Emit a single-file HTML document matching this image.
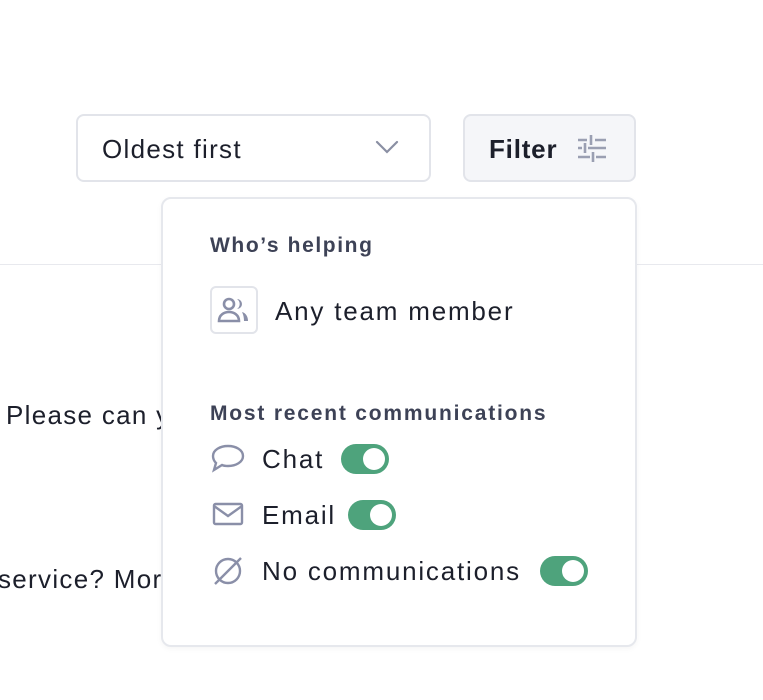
<!DOCTYPE html>
<html><head><style>
*{margin:0;padding:0;box-sizing:border-box}
body{width:763px;height:700px;background:#fff;position:relative;overflow:hidden;font-family:"Liberation Sans",sans-serif;color:#1c1f2b}
.a{position:absolute}
.t{font-size:26px;white-space:nowrap;letter-spacing:1.8px}
.h{font-size:21px;font-weight:bold;color:#3d4256;letter-spacing:1.6px;white-space:nowrap}
.tg{position:absolute;width:48px;height:30px;border-radius:15px;background:#4ea37c}
.tg::after{content:"";position:absolute;right:4px;top:4px;width:22px;height:22px;border-radius:50%;background:#fff}
</style></head><body>
<div class="a" style="left:0;top:264px;width:763px;height:1px;background:#e8e9ee"></div>
<div class="a t" style="left:6px;top:400px;letter-spacing:1.3px">Please can you</div>
<div class="a t" style="left:-2px;top:564px;letter-spacing:1.3px">service? More</div>
<div class="a" style="left:76px;top:114px;width:355px;height:68px;border:2px solid #e2e4ea;border-radius:8px;background:#fff"></div>
<div class="a t" style="left:102px;top:134px;letter-spacing:1.3px">Oldest first</div>
<svg class="a" style="left:375px;top:139px" width="24" height="16"><path d="M2 3l10 10 10-10" fill="none" stroke="#8a8fa3" stroke-width="2.2" stroke-linecap="round"/></svg>
<div class="a" style="left:463px;top:114px;width:173px;height:68px;border:2px solid #e2e4ea;border-radius:8px;background:#f5f6f9"></div>
<div class="a t" style="left:489px;top:134px;font-weight:bold;letter-spacing:0.8px">Filter</div>
<svg class="a" style="left:577px;top:135px" width="30" height="28" stroke="#9a9fb2" stroke-width="2.6" fill="none"><path d="M1 5h9M18 5h11M14 0v10M1 13h4M11 13h18M8 8v10M1 22h12M19 22h10M16 17v10"/></svg>
<div class="a" style="left:161px;top:197px;width:476px;height:450px;border:2px solid #e6e8ed;border-radius:10px;background:#fff;box-shadow:0 2px 6px rgba(0,0,0,.04)"></div>
<div class="a h" style="left:210px;top:234px">Who’s helping</div>
<div class="a" style="left:210px;top:286px;width:48px;height:48px;border:2px solid #e2e4ea;border-radius:6px"></div>
<svg class="a" style="left:216px;top:294px" width="36" height="32" fill="#8a8fa8"><circle cx="13" cy="10" r="5" fill="none" stroke="#8a8fa8" stroke-width="2.6"/><path d="M3 27c0-6 5-9 10-9s10 3 10 9z" fill="none" stroke="#8a8fa8" stroke-width="2.6"/><path d="M21 5a5 5 0 0 1 0 10a6 6 0 0 0 0-10zM26 18c4 1 6 5 6 9h-4c0-4-1-7-2-9z"/></svg>
<div class="a t" style="left:275px;top:296px">Any team member</div>
<div class="a h" style="left:210px;top:402px;letter-spacing:1.8px">Most recent communications</div>
<svg class="a" style="left:211px;top:444px" width="34" height="30" fill="none" stroke="#8a8fa8" stroke-width="2.4"><path d="M17 2c8 0 15 4 15 10s-7 10-15 10c-2 0-4 0-6-1l-8 5 2-7C3 17 2 15 2 12 2 6 9 2 17 2z"/></svg>
<div class="a t" style="left:262px;top:444px">Chat</div>
<div class="tg" style="left:341px;top:444px"></div>
<svg class="a" style="left:212px;top:502px" width="32" height="24" fill="none" stroke="#8a8fa8" stroke-width="2.4"><rect x="2" y="2" width="28" height="20" rx="1.5"/><path d="M2 4l14 10 14-10"/></svg>
<div class="a t" style="left:262px;top:500px">Email</div>
<div class="tg" style="left:348px;top:500px"></div>
<svg class="a" style="left:211px;top:555px" width="34" height="32" fill="none" stroke="#8a8fa8" stroke-width="2.4"><circle cx="17" cy="16" r="12"/><path d="M30 3L4 29"/></svg>
<div class="a t" style="left:262px;top:556px">No communications</div>
<div class="tg" style="left:540px;top:556px"></div>
</body></html>
